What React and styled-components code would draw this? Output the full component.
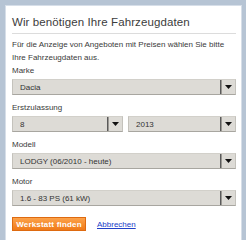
import React from "react";
import styled, { createGlobalStyle } from "styled-components";

const Global = createGlobalStyle`
  html, body { margin: 0; padding: 0; }
  body {
    background: #b6c4d4;
    font-family: "Liberation Sans", Arial, sans-serif;
    overflow: hidden;
    height: 240px;
  }
`;

const Panel = styled.div`
  margin: 5px 0 0 5px;
  width: 237px;
  height: 260px;
  background: #ffffff;
  border: 1px solid #d6dee8;
  box-sizing: border-box;
  padding: 9px 5px 0 6px;
`;

const Title = styled.h1`
  margin: 0;
  font-size: 11.5px;
  line-height: 14px;
  font-weight: normal;
  color: #3c3c3c;
  letter-spacing: 0.1px;
`;

const Rule = styled.hr`
  margin: 4px 0 4px 0;
  border: 0;
  height: 1px;
  background: #dcdcdc;
`;

const Intro = styled.p`
  margin: 0;
  font-size: 8px;
  line-height: 13px;
  color: #3a3a3a;
`;

const Field = styled.div`
  display: flex;
  flex-direction: column;
  gap: 2px;
  margin-top: ${(p) => p.$top ?? 7}px;
`;

const Label = styled.label`
  font-size: 8px;
  line-height: 12px;
  color: #3a3a3a;
`;

const Row = styled.div`
  display: grid;
  grid-template-columns: 111px 1fr;
  gap: 5px;
`;

const Select = styled.div`
  flex: none;
  height: 16px;
  box-sizing: border-box;
  display: flex;
  align-items: center;
  background: #dddbd6;
  border: 1px solid #c4c2bc;
  border-top-color: #d2d0ca;
  border-bottom-color: #a8a6a0;
  padding-left: 7px;
  font-size: 8px;
  color: #333;
`;

const Value = styled.span`
  flex: 1;
  white-space: nowrap;
  overflow: hidden;
`;

const Arrow = styled.span`
  width: 14px;
  height: 100%;
  display: flex;
  align-items: center;
  justify-content: center;
  border-left: 1px solid #5a5a5a;
  box-shadow: inset 1px 0 0 #9a9893;
`;

const Actions = styled.div`
  display: flex;
  align-items: center;
  gap: 11px;
  margin-top: 11px;
`;

const Button = styled.button`
  width: 74px;
  height: 14px;
  padding: 0;
  border: 1px solid #de6a10;
  background: linear-gradient(#fca24a, #f07a18);
  color: #fff;
  font-family: "Liberation Sans", Arial, sans-serif;
  font-weight: bold;
  font-size: 8px;
  letter-spacing: 0.2px;
`;

const Link = styled.a`
  font-size: 8px;
  color: #2140c8;
  text-decoration: underline;
`;

const Tri = () => (
  <svg width="7" height="4" viewBox="0 0 7 4">
    <path d="M0 0H7L3.5 4Z" fill="#111" />
  </svg>
);

const Dropdown = ({ value }) => (
  <Select>
    <Value>{value}</Value>
    <Arrow>
      <Tri />
    </Arrow>
  </Select>
);

export default function App() {
  return (
    <>
      <Global />
      <Panel>
        <Title>Wir benötigen Ihre Fahrzeugdaten</Title>
        <Rule />
        <Intro>
          Für die Anzeige von Angeboten mit Preisen wählen Sie bitte Ihre
          Fahrzeugdaten aus.
        </Intro>
        <Field $top={1}>
          <Label>Marke</Label>
          <Dropdown value="Dacia" />
        </Field>
        <Field>
          <Label>Erstzulassung</Label>
          <Row>
            <Dropdown value="8" />
            <Dropdown value="2013" />
          </Row>
        </Field>
        <Field>
          <Label>Modell</Label>
          <Dropdown value="LODGY (06/2010 - heute)" />
        </Field>
        <Field>
          <Label>Motor</Label>
          <Dropdown value="1.6 - 83 PS (61 kW)" />
        </Field>
        <Actions>
          <Button>Werkstatt finden</Button>
          <Link href="#">Abbrechen</Link>
        </Actions>
      </Panel>
    </>
  );
}
